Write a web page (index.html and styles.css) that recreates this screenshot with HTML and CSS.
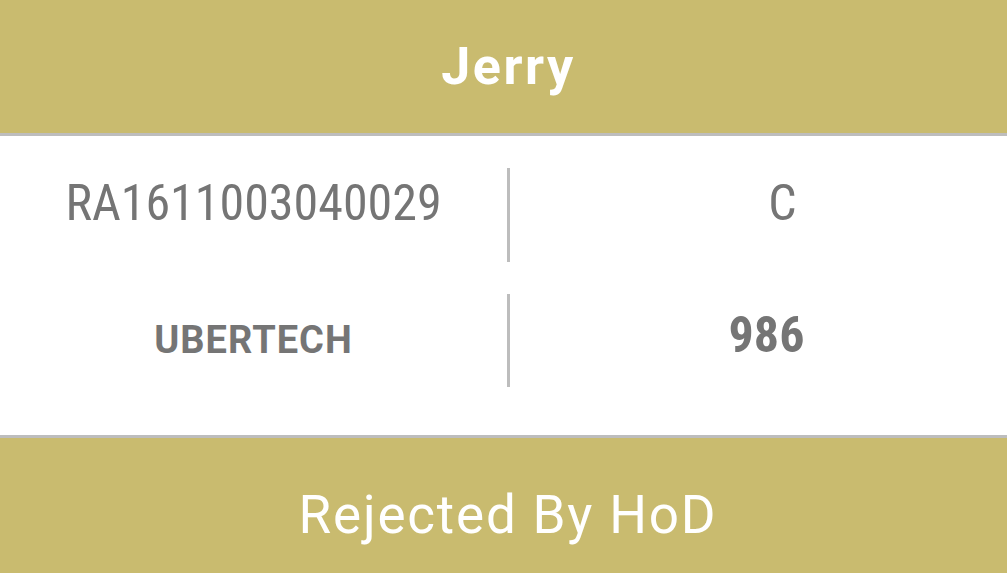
FILE: index.html
```html
<!DOCTYPE html>
<html>
<head>
<meta charset="utf-8">
<link rel="stylesheet" href="styles.css">
</head>
<body>
<div class="card">
  <div class="head">Jerry</div>
  <div class="body">
    <div class="row row-top">
      <div class="cell id">RA1611003040029</div>
      <div class="sep"></div>
      <div class="cell grade">C</div>
    </div>
    <div class="row">
      <div class="cell team">UBERTECH</div>
      <div class="sep"></div>
      <div class="cell score">986</div>
    </div>
  </div>
  <div class="foot">Rejected By HoD</div>
</div>
</body>
</html>
```

FILE: styles.css
```css
html, body {
  margin: 0;
  padding: 0;
  background: #ffffff;
}
.card {
  width: 1007px;
  height: 573px;
  display: flex;
  flex-direction: column;
  font-family: Roboto, "Liberation Sans", sans-serif;
}
.head {
  height: 133px;
  background: #c9bb6f;
  border-bottom: 3px solid #bdbdbd;
  color: #ffffff;
  font-weight: 700;
  font-size: 52px;
  letter-spacing: 2.5px;
  display: flex;
  align-items: center;
  justify-content: center;
  padding-left: 10px;
}
.body {
  height: 302px;
  box-sizing: border-box;
  padding: 32px 0 48px;
  display: flex;
  flex-direction: column;
  gap: 32px;
  border-bottom: 3px solid #bdbdbd;
}
.row {
  height: 95px;
  display: grid;
  grid-template-columns: 507px 3px 1fr;
}
.sep {
  background: #bdbdbd;
}
.cell {
  display: flex;
  align-items: center;
  justify-content: center;
  color: #757575;
}
.row-top .cell {
  padding-bottom: 24px;
}
.id, .grade, .score {
  font-family: "Roboto Condensed", "DejaVu Sans", sans-serif;
  font-stretch: condensed;
  font-size: 50px;
  font-weight: 400;
}
.grade {
  padding-left: 48px;
}
.score {
  padding-left: 16px;
  padding-bottom: 10px;
  font-weight: 700;
}
.team {
  font-family: Roboto, "Liberation Sans", sans-serif;
  font-weight: 700;
  font-size: 38px;
  letter-spacing: 1px;
}
.foot {
  flex: 1;
  background: #c9bb6f;
  color: #ffffff;
  font-size: 53px;
  letter-spacing: 1.8px;
  display: flex;
  align-items: center;
  justify-content: center;
  padding-top: 18px;
  padding-left: 9px;
}
```
